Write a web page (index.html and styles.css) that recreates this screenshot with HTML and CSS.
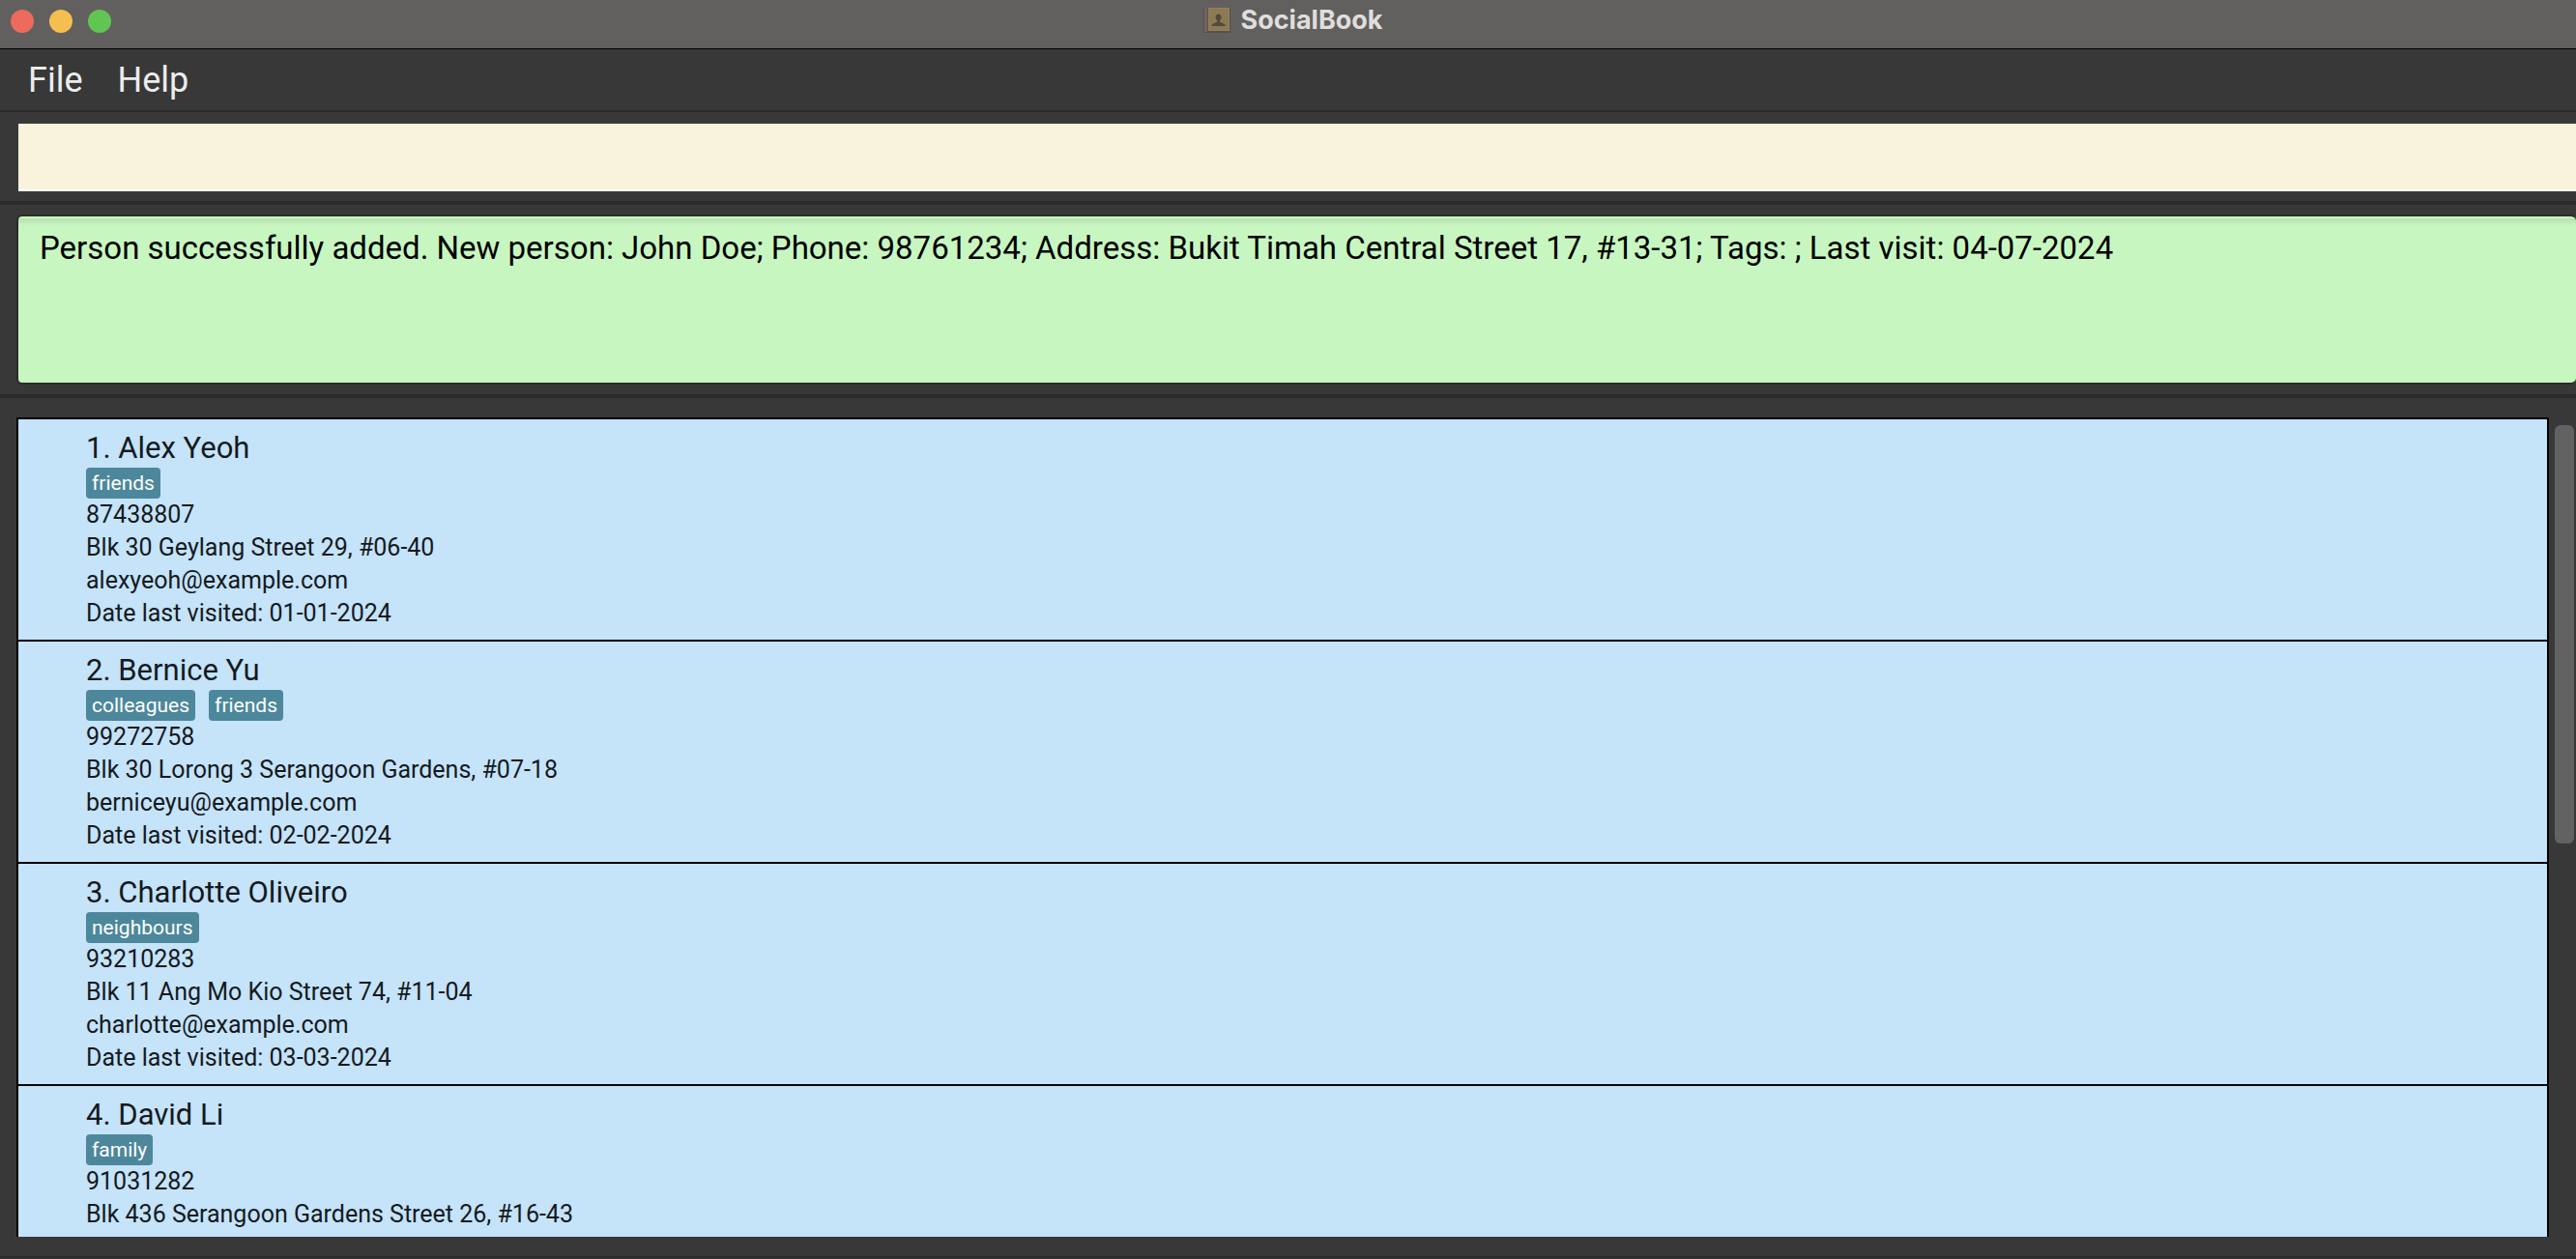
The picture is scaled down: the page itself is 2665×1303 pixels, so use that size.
FILE: index.html
```html
<!DOCTYPE html>
<html lang="en">
<head>
<meta charset="utf-8">
<title>SocialBook</title>
<link rel="stylesheet" href="styles.css">
</head>
<body>
<header class="titlebar">
  <div class="lights">
    <button class="light close" type="button" aria-label="Close"></button>
    <button class="light minimise" type="button" aria-label="Minimise"></button>
    <button class="light zoom" type="button" aria-label="Zoom"></button>
  </div>
  <h1 class="title">
    <svg class="book" viewBox="0 0 28 28" aria-hidden="true">
      <rect x="0" y="1" width="28" height="26" rx="1" fill="#57504b"/>
      <rect x="1" y="1" width="3" height="25" fill="#70665f"/>
      <rect x="5" y="1" width="22" height="24" fill="#94825b"/>
      <rect x="6" y="2" width="20" height="22" fill="#8c7a55"/>
      <path d="M15.500 7.500c2 0 3 1.500 3 3.300 0 1.600-.6 2.800-1.500 3.600v1.300l4.200 1.800c1 .5 1.500 1.200 1.500 2.500H8.500c0-1.300.5-2 1.500-2.500l4.200-1.800v-1.300c-.9-.8-1.600-2-1.600-3.600 0-1.800 1-3.300 2.900-3.300z" fill="#544a3b"/>
    </svg>
    SocialBook
  </h1>
</header>
<nav class="menubar">
  <button class="menu" type="button">File</button>
  <button class="menu" type="button">Help</button>
</nav>
<main class="content">
  <section class="pane command">
    <input class="command-box" type="text" aria-label="Command">
  </section>
  <section class="pane result">
    <output class="result-box">Person successfully added. New person: John Doe; Phone: 98761234; Address: Bukit Timah Central Street 17, #13-31; Tags: ; Last visit: 04-07-2024</output>
  </section>
  <section class="people">
    <ul class="list">
      <li class="person">
        <h2 class="name">1. Alex Yeoh</h2>
        <div class="tags"><span class="tag">friends</span></div>
        <p class="detail">87438807</p>
        <p class="detail">Blk 30 Geylang Street 29, #06-40</p>
        <p class="detail">alexyeoh@example.com</p>
        <p class="detail">Date last visited: 01-01-2024</p>
      </li>
      <li class="person">
        <h2 class="name">2. Bernice Yu</h2>
        <div class="tags"><span class="tag">colleagues</span><span class="tag">friends</span></div>
        <p class="detail">99272758</p>
        <p class="detail">Blk 30 Lorong 3 Serangoon Gardens, #07-18</p>
        <p class="detail">berniceyu@example.com</p>
        <p class="detail">Date last visited: 02-02-2024</p>
      </li>
      <li class="person">
        <h2 class="name">3. Charlotte Oliveiro</h2>
        <div class="tags"><span class="tag">neighbours</span></div>
        <p class="detail">93210283</p>
        <p class="detail">Blk 11 Ang Mo Kio Street 74, #11-04</p>
        <p class="detail">charlotte@example.com</p>
        <p class="detail">Date last visited: 03-03-2024</p>
      </li>
      <li class="person">
        <h2 class="name">4. David Li</h2>
        <div class="tags"><span class="tag">family</span></div>
        <p class="detail">91031282</p>
        <p class="detail">Blk 436 Serangoon Gardens Street 26, #16-43</p>
      </li>
    </ul>
    <div class="scrollbar"><div class="thumb"></div></div>
  </section>
</main>
</body>
</html>
```
FILE: styles.css
```css
* { box-sizing: border-box; margin: 0; padding: 0; }

body {
  display: flex;
  flex-direction: column;
  height: 100vh;
  overflow: hidden;
  background: #383838;
  color: #141a1e;
  font-family: Roboto, "Liberation Sans", sans-serif;
}

button { border: 0; background: none; font: inherit; }

/* Window chrome */
.titlebar {
  display: grid;
  grid-template-columns: 1fr auto 1fr;
  height: 51px;
  padding: 0 0 0 11px;
  border-bottom: 1px solid #000;
  background: #62605e;
}
.lights { display: flex; gap: 16px; padding-top: 10px; }
.light { width: 24px; height: 24px; border-radius: 50%; }
.close { background: #ed6a5e; }
.minimise { background: #f5bf4f; }
.zoom { background: #61c554; }
.title {
  display: flex;
  align-items: center;
  gap: 10px;
  height: 42px;
  color: #dfdedd;
  font-family: Inter, "Liberation Sans", sans-serif;
  font-size: 27px;
  font-weight: 700;
  line-height: 42px;
}
.book { width: 28px; height: 28px; }

.menubar {
  display: flex;
  gap: 36px;
  height: 65px;
  padding: 0 29px;
  border-bottom: 2px solid #2b2b2b;
}
.menu { color: #ececec; font-size: 36px; line-height: 62px; }

/* Stacked panes */
.content { display: flex; flex: 1; flex-direction: column; min-height: 0; }
.pane { border-bottom: 4px solid #2b2b2b; }
.command { padding: 12px 0 10px 19px; }
.command-box {
  display: block;
  width: 100%;
  height: 70px;
  padding: 0 20px;
  border: 0;
  border-bottom: 2px solid #fff;
  outline: 0;
  background: #faf3dc;
  font: inherit;
  font-size: 33px;
}
.result { padding: 10px 0 10px 17px; }
.result-box {
  display: block;
  height: 176px;
  padding: 13px 22px;
  border: solid #2b2b2b;
  border-width: 2px 0 2px 2px;
  border-radius: 6px;
  background: linear-gradient(#c8f6c1 2px, #b8e1b1 2px, #c8f6c1 10px);
  color: #000;
  font-size: 33px;
  line-height: 40px;
}

.people {
  display: flex;
  flex: 1;
  min-height: 0;
  padding: 20px 0;
  margin-bottom: 1px;
  border-bottom: 2px solid #2b2b2b;
}
.list {
  flex: 1;
  overflow: hidden;
  border: solid #000;
  border-width: 2px 2px 0;
  margin-left: 17px;
  background: #c5e3f9;
  list-style: none;
}
.person { padding: 10px 70px; border-bottom: 2px solid #000; }
.person:last-child { border-bottom: 0; }
.name { font-size: 31px; font-weight: 400; line-height: 40px; }
.tags { display: flex; gap: 14px; }
.tag {
  padding: 0 6px;
  border-radius: 4px;
  background: #4d879c;
  color: #fff;
  font-size: 21px;
  line-height: 32px;
}
.detail { font-size: 25px; line-height: 34px; }

.scrollbar { width: 28px; padding: 8px 2px 8px 6px; }
.thumb { height: 52%; border-radius: 6px; background: #626262; }
```
